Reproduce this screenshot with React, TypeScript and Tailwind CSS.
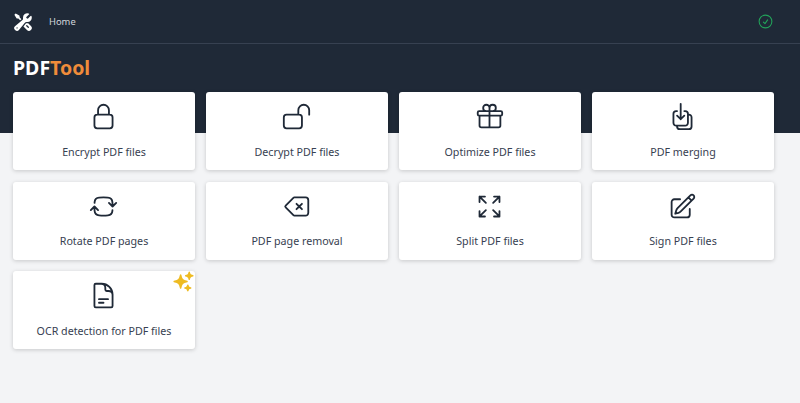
import React from "react";
import {
  HiOutlineLockClosed,
  HiOutlineLockOpen,
  HiOutlineGift,
  HiOutlineArrowDownOnSquareStack,
  HiOutlineArrowPathRoundedSquare,
  HiOutlineBackspace,
  HiOutlineArrowsPointingOut,
  HiOutlinePencilSquare,
  HiOutlineDocumentText,
  HiSparkles,
  HiWrenchScrewdriver,
  HiOutlineCheckCircle,
} from "react-icons/hi2";

const tools = [
  { label: "Encrypt PDF files", Icon: HiOutlineLockClosed },
  { label: "Decrypt PDF files", Icon: HiOutlineLockOpen },
  { label: "Optimize PDF files", Icon: HiOutlineGift },
  { label: "PDF merging", Icon: HiOutlineArrowDownOnSquareStack },
  { label: "Rotate PDF pages", Icon: HiOutlineArrowPathRoundedSquare },
  { label: "PDF page removal", Icon: HiOutlineBackspace },
  { label: "Split PDF files", Icon: HiOutlineArrowsPointingOut },
  { label: "Sign PDF files", Icon: HiOutlinePencilSquare },
  { label: "OCR detection for PDF files", Icon: HiOutlineDocumentText, star: true },
];

export default function App() {
  return (
    <div className="h-[403px] w-[800px] overflow-hidden bg-[#f3f4f6] font-['Noto_Sans','Open_Sans',sans-serif]">
      <div className="h-[133px] bg-[#1f2937]">
        <nav className="flex h-[44px] items-center border-b border-[#374151] pl-[13px] pr-[26px]">
          <HiWrenchScrewdriver className="h-[20px] w-[20px] text-white" />
          <span className="ml-[16px] pt-[1px] text-[9.4px] text-[#d1d5db]">Home</span>
          <HiOutlineCheckCircle className="ml-auto h-[17px] w-[17px] text-[#22a35a]" />
        </nav>
        <h1 className="pl-[13px] pt-[10px] text-[19.5px] font-bold leading-[28px] text-white">
          PDF<span className="text-[#f08c3a]">Tool</span>
        </h1>
      </div>
      <main className="-mt-[41px] grid grid-cols-4 auto-rows-[78px] gap-x-[11px] gap-y-[11.5px] pl-[13px] pr-[26px]">
        {tools.map(({ label, Icon, star }) => (
          <div
            key={label}
            className="relative flex flex-col items-center rounded-[3px] bg-white pt-[10px] shadow-[0_1px_4px_rgba(0,0,0,0.18)]"
          >
            <Icon className="-ml-[1px] h-[29px] w-[29px] text-[#1f2937]" />
            <span className="mt-[12.5px] text-[10.7px] leading-[16px] text-[#374151]">{label}</span>
            {star && (
              <HiSparkles className="absolute right-0 -top-[1px] h-[23px] w-[23px] text-[#eebb22]" />
            )}
          </div>
        ))}
      </main>
    </div>
  );
}
